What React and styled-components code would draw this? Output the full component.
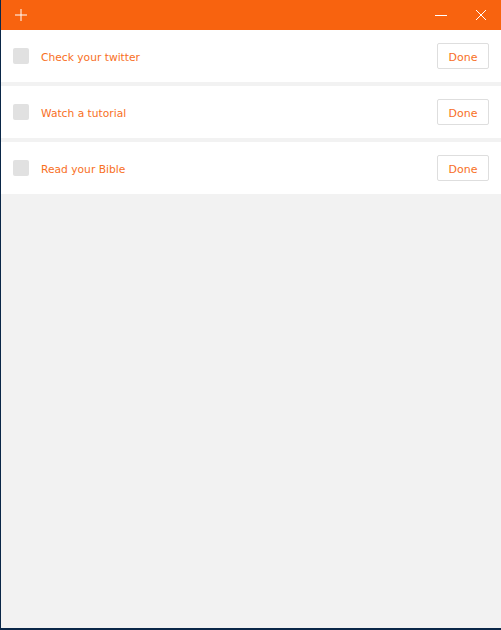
import React from 'react'
import styled, { createGlobalStyle } from 'styled-components'

const Global = createGlobalStyle`
  html, body { margin: 0; padding: 0; }
  body {
    font-family: "DejaVu Sans", Verdana, sans-serif;
    background: #0a2748;
  }
`

const Window = styled.div`
  box-sizing: border-box;
  width: 501px;
  height: 630px;
  padding: 0 0 2px 1px;
  background: #0a2748;
  display: flex;
  flex-direction: column;
`

const Inner = styled.div`
  flex: 1;
  background: #f2f2f2;
  display: flex;
  flex-direction: column;
`

const TitleBar = styled.div`
  height: 30px;
  background: #f8630f;
  display: flex;
  align-items: center;
  padding: 0 0 0 8px;
`

const BarButton = styled.button`
  width: ${p => p.w || 40}px;
  height: 30px;
  border: none;
  background: transparent;
  padding: 0;
  display: flex;
  align-items: center;
  justify-content: center;
  cursor: pointer;
`

const Spacer = styled.div`
  flex: 1;
`

const List = styled.div`
  display: flex;
  flex-direction: column;
  gap: 4px;
`

const Row = styled.div`
  height: 52px;
  background: #fff;
  display: flex;
  align-items: center;
  padding: 0 12px 0 12px;
`

const Check = styled.div`
  width: 16px;
  height: 16px;
  border-radius: 2px;
  background: #e1e1e1;
`

const Label = styled.span`
  flex: 1;
  margin-left: 12px;
  padding-top: 3px;
  font-size: 10.7px;
  color: #f86f1e;
`

const DoneButton = styled.button`
  width: 52px;
  height: 26px;
  background: #fff;
  border: 1px solid #dedede;
  border-radius: 2px;
  font-family: inherit;
  font-size: 11px;
  color: #f86f1e;
  padding: 2px 0 0;
  cursor: pointer;
`

const tasks = ['Check your twitter', 'Watch a tutorial', 'Read your Bible']

export default function App() {
  return (
    <Window>
      <Global />
      <Inner>
        <TitleBar>
          <BarButton w={24}>
            <svg width="14" height="14" viewBox="0 0 14 14">
              <path d="M7 1v12M1 7h12" stroke="#fff" strokeWidth="1" fill="none" />
            </svg>
          </BarButton>
          <Spacer />
          <BarButton w={40}>
            <svg width="14" height="14" viewBox="0 0 14 14">
              <path d="M1 7.5h12" stroke="#fff" strokeWidth="1" fill="none" />
            </svg>
          </BarButton>
          <BarButton w={40}>
            <svg width="12" height="12" viewBox="0 0 12 12">
              <path d="M1 1l10 10M11 1L1 11" stroke="#fff" strokeWidth="1" fill="none" />
            </svg>
          </BarButton>
        </TitleBar>
        <List>
          {tasks.map(t => (
            <Row key={t}>
              <Check />
              <Label>{t}</Label>
              <DoneButton>Done</DoneButton>
            </Row>
          ))}
        </List>
      </Inner>
    </Window>
  )
}
